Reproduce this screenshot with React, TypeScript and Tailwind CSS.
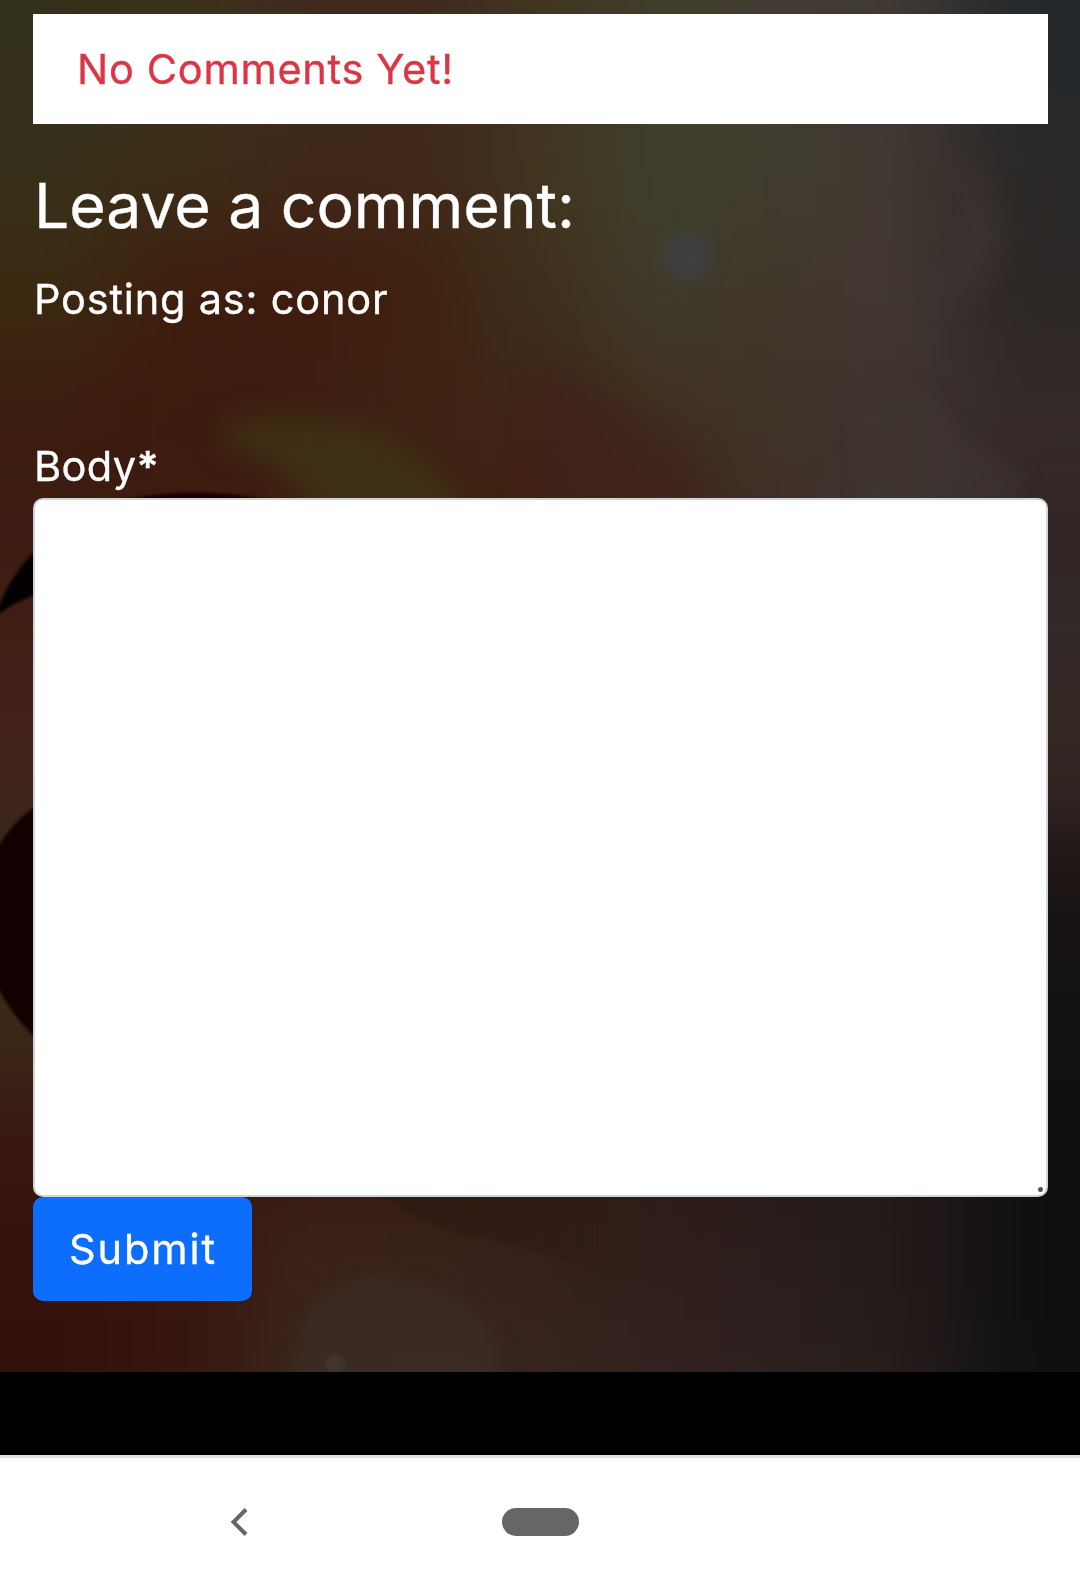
import React from "react";

// Coarse colour field of the out-of-focus photo: 120px cells, smoothed by a blur.
const CELL = 120;
const field: string[][] = [
  ["#33301b", "#3b331c", "#402a20", "#40291f", "#403521", "#403e2a", "#413b33", "#403934", "#24282b"],
  ["#38301a", "#3d2c17", "#3f2818", "#402718", "#40351f", "#3f402b", "#403c30", "#41372f", "#2a2827"],
  ["#3c2911", "#3d1c0e", "#3e1b0d", "#3f210f", "#3e2f1d", "#3f3a28", "#40352a", "#433733", "#2b2725"],
  ["#3b1c0e", "#3d190c", "#3d1e12", "#3e2313", "#402416", "#40301f", "#3f3329", "#3c312d", "#362b29"],
  ["#3c1c12", "#3e1c11", "#3e1e10", "#3d2012", "#40200f", "#40241b", "#3f2f28", "#3e3330", "#302523"],
  ["#431e15", "#3e1f14", "#3e1f14", "#3e1f14", "#3c2017", "#3c261d", "#3c2e28", "#3a2f2b", "#342a27"],
  ["#40241a", "#3e1f14", "#3e1f14", "#3e1f14", "#3c2017", "#3a241d", "#382a25", "#362824", "#332421"],
  ["#382816", "#38251a", "#38251a", "#38251a", "#36231a", "#32211c", "#2e201d", "#241b19", "#181313"],
  ["#3b2918", "#38201a", "#38201a", "#36201a", "#34201a", "#30201c", "#281d1a", "#1c1716", "#121111"],
  ["#381810", "#37180f", "#36190f", "#35190f", "#30190f", "#2c1b17", "#271a18", "#221b19", "#111010"],
  ["#36130c", "#37170f", "#3b2119", "#39221a", "#35201a", "#301e1a", "#291e1c", "#241b1a", "#100f10"],
  ["#33120b", "#36160e", "#3a241c", "#3a2922", "#38241e", "#32211e", "#2c201f", "#261d1c", "#101011"],
];

function Backdrop() {
  return (
    <svg
      className="absolute inset-0 h-full w-full"
      viewBox="0 0 1080 1372"
      preserveAspectRatio="none"
      aria-hidden="true"
    >
      <defs>
        <filter id="field" x="-20%" y="-20%" width="140%" height="140%" colorInterpolationFilters="sRGB">
          <feGaussianBlur stdDeviation="46" />
        </filter>
        <filter id="haze" x="-50%" y="-50%" width="200%" height="200%" colorInterpolationFilters="sRGB">
          <feGaussianBlur stdDeviation="14" />
        </filter>
        <filter id="soft" x="-50%" y="-50%" width="200%" height="200%" colorInterpolationFilters="sRGB">
          <feGaussianBlur stdDeviation="8" />
        </filter>
        <filter id="edge" x="-20%" y="-20%" width="140%" height="140%" colorInterpolationFilters="sRGB">
          <feGaussianBlur stdDeviation="1.5" />
        </filter>
        <linearGradient id="band" x1="380" x2="700" y1="0" y2="0" gradientUnits="userSpaceOnUse">
          <stop offset="0" stopColor="#2e1a13" />
          <stop offset="0.6" stopColor="#2f1b14" stopOpacity="0.8" />
          <stop offset="1" stopColor="#2f1d18" stopOpacity="0" />
        </linearGradient>
      </defs>
      <rect width="1080" height="1372" fill="#38241c" />
      <g filter="url(#field)">
        {field.map((row, r) =>
          row.map((fill, c) => {
            const left = c === 0 ? -140 : c * CELL;
            const right = c === row.length - 1 ? 1220 : (c + 1) * CELL + 1;
            const top = r === 0 ? -140 : r * CELL;
            const bottom = r === field.length - 1 ? 1520 : (r + 1) * CELL + 1;
            return (
              <rect key={`${r}-${c}`} x={left} y={top} width={right - left} height={bottom - top} fill={fill} />
            );
          }),
        )}
      </g>
      <g filter="url(#haze)">
        <path d="M220 425 Q300 408 375 432 Q450 464 480 530 L330 530 Q290 460 220 442Z" fill="#3f3015" />
        <path d="M540 370 Q650 400 705 470 L705 530 L530 530Z" fill="#40201a" opacity="0.5" />
        <path d="M930 130 Q980 160 1000 240 Q990 290 940 300 Q1000 200 930 130Z" fill="#443836" opacity="0.6" />
      </g>
      <g filter="url(#soft)">
        <circle cx="687" cy="257" r="25" fill="#3e4142" opacity="0.9" />
        <path d="M850 420 Q890 360 940 400 Q965 455 1025 470 L1015 510 L860 510Z" fill="#403532" opacity="0.5" />
        <path d="M290 1385 Q285 1290 370 1276 Q480 1290 498 1345 L496 1385Z" fill="#3b2e25" opacity="0.65" />
      </g>
      <g filter="url(#edge)">
        <path d="M120 501 Q190 484 275 501Z" fill="#190000" />
        <path
          d="M34 551 Q8 578 -4 612 L-4 617 Q15 602 34 596 L60 596 L60 540Z"
          fill="#050000"
          stroke="#3d2520"
          strokeWidth="1"
        />
        <path d="M36 806 Q14 820 -4 850 L-4 984 Q12 1016 36 1038 L60 1050 L60 800Z" fill="#130001" />
        <path d="M380 1194 Q420 1228 492 1240 Q540 1250 620 1278 L720 1278 L720 1194Z" fill="url(#band)" opacity="0.8" />
        <circle cx="335" cy="1364" r="10" fill="#40352c" />
      </g>
    </svg>
  );
}

export default function App() {
  return (
    <div className="flex h-[1578px] w-[1080px] flex-col overflow-hidden bg-black font-['Inter',sans-serif] text-[41.5px] leading-[64px] text-white [-webkit-text-stroke:0.35px]">
      <main className="relative isolate flex h-[1372px] shrink-0 flex-col items-start overflow-hidden px-[33px] pr-8 pt-[13.5px]">
        <div className="absolute inset-0 -z-10">
          <Backdrop />
        </div>
        <div className="flex h-[110px] w-full shrink-0 items-center bg-white pl-[44px] text-[#dc3545]">
          <span className="whitespace-nowrap tracking-[0.68px]">No Comments Yet!</span>
        </div>
        <h1 className="mt-[43px] h-[77px] whitespace-nowrap pl-px text-[62.5px] leading-[77px] tracking-[-0.05px]">
          Leave a comment:
        </h1>
        <p className="mt-[23px] h-16 whitespace-nowrap pl-px tracking-[0.8px]">Posting as: conor</p>
        <label htmlFor="body" className="mt-[103px] h-16 whitespace-nowrap pl-px tracking-[0.4px]">
          Body<span className="font-semibold">*</span>
        </label>
        <div className="relative h-[699px] w-full shrink-0">
          <textarea
            id="body"
            className="block h-full w-full resize-none rounded-[10px] border-2 border-[#ced4da] bg-white text-black outline-none"
          />
          <span className="absolute bottom-[5px] right-[5px] size-[5px] rounded-full bg-[#555]" />
        </div>
        <button className="h-[104px] w-[219px] shrink-0 whitespace-nowrap rounded-[10px] bg-[#0d6efd] pl-px tracking-[1.9px]">
          Submit
        </button>
      </main>
      <div className="h-[83px] shrink-0 bg-black" />
      <nav className="relative flex h-[123px] shrink-0 items-center justify-center border-t-[3px] border-[#e2e2e2] bg-white">
        <svg className="absolute left-[229px] top-[49px]" width="20" height="30" viewBox="0 0 20 30" fill="none">
          <path d="M17 2.5 4.5 15 17 27.5" stroke="#666" strokeWidth="4" />
        </svg>
        <span className="mt-[7px] h-7 w-[77px] rounded-full bg-[#666]" />
      </nav>
    </div>
  );
}
